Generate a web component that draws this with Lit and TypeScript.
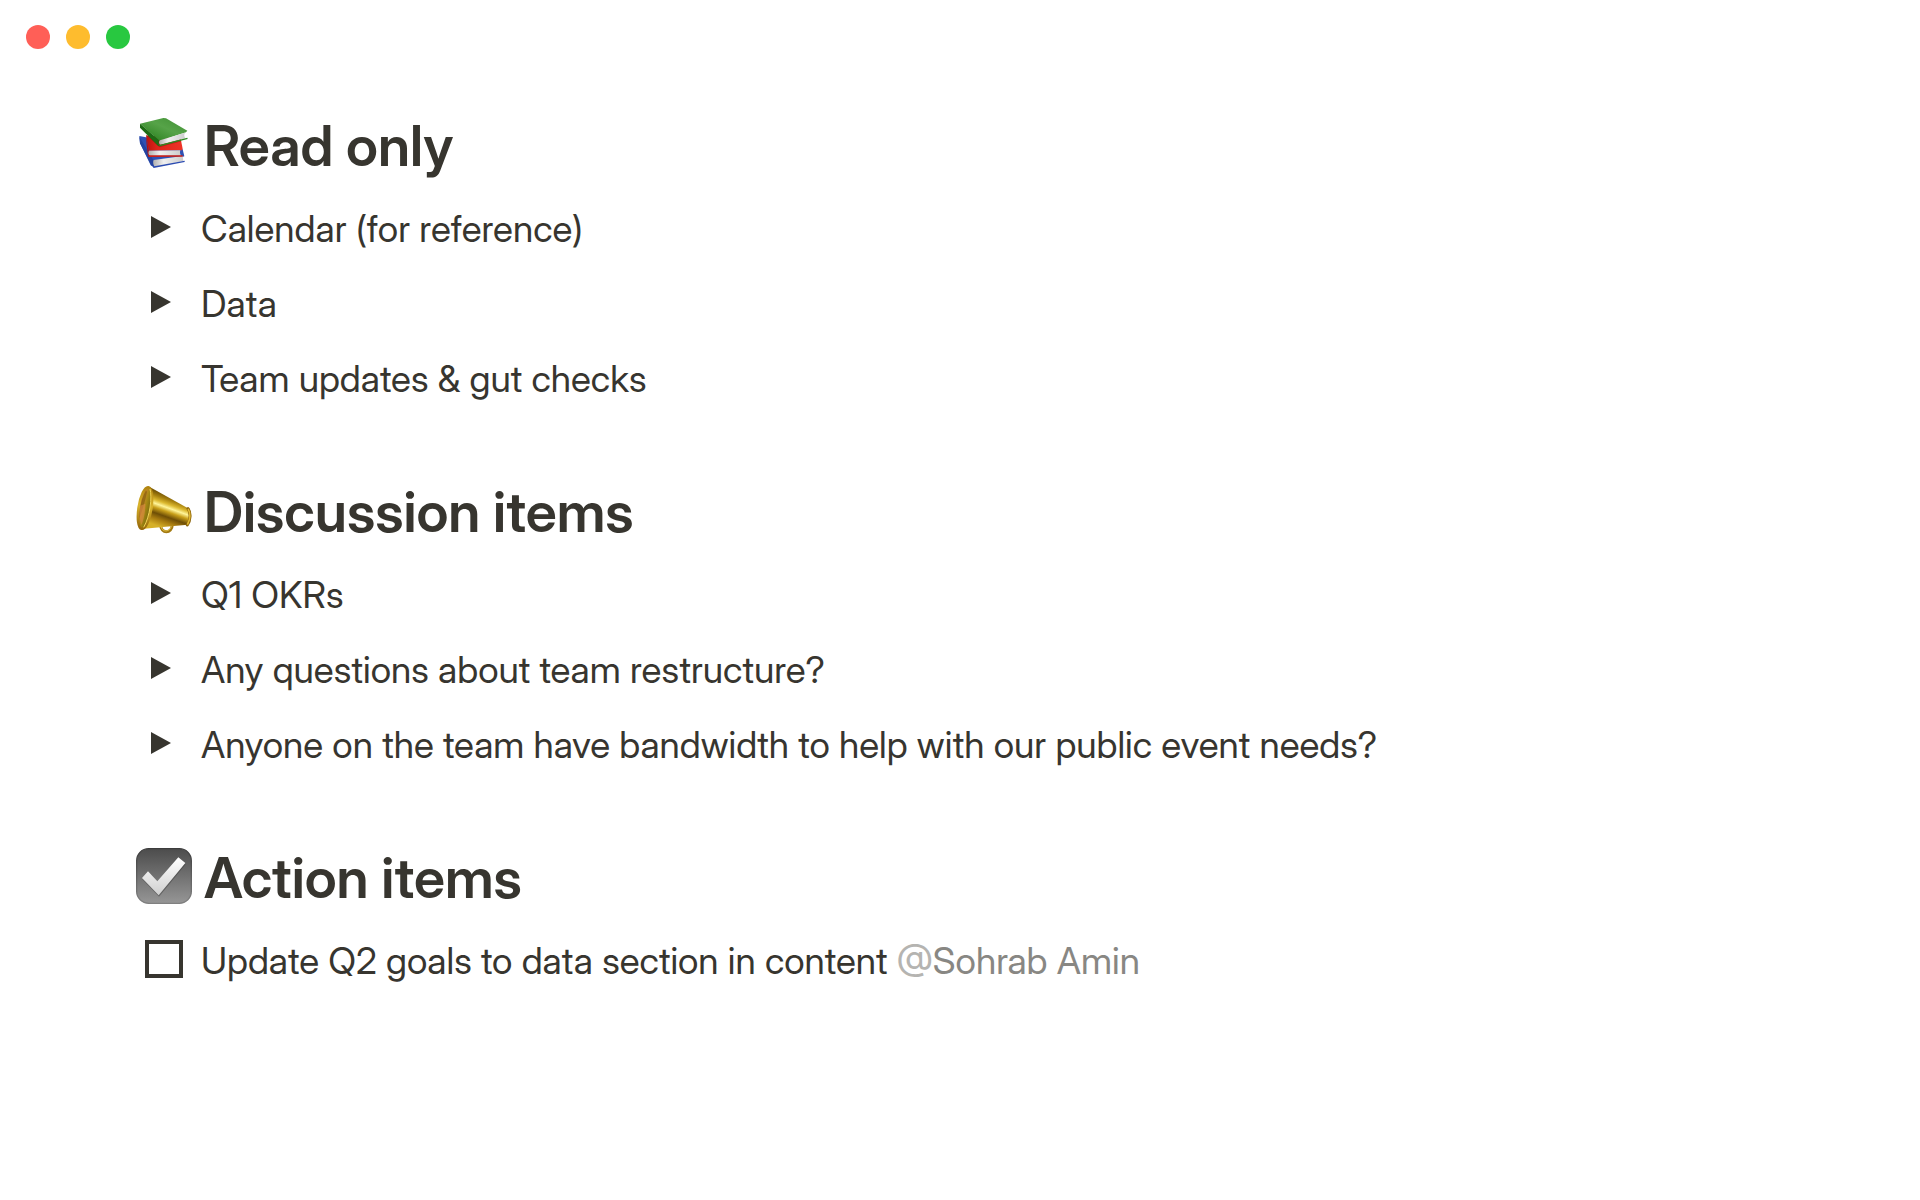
import { LitElement, html, css, svg } from "lit";
import { customElement, property, state } from "lit/decorators.js";

const booksIcon = svg`
  <svg viewBox="18 18 168 168" aria-hidden="true">
    <defs>
      <linearGradient id="bk-green" x1="0" y1="1" x2="1" y2="0">
        <stop offset="0" stop-color="#237a18" />
        <stop offset="0.55" stop-color="#56a348" />
        <stop offset="1" stop-color="#3f8f33" />
      </linearGradient>
      <linearGradient id="bk-page" x1="0" y1="0" x2="1" y2="0">
        <stop offset="0" stop-color="#b0b0b0" />
        <stop offset="0.35" stop-color="#f0f0f0" />
        <stop offset="1" stop-color="#cccccc" />
      </linearGradient>
      <linearGradient id="bk-red" x1="0" y1="0" x2="1" y2="0">
        <stop offset="0" stop-color="#b9140f" />
        <stop offset="0.3" stop-color="#dd241b" />
        <stop offset="1" stop-color="#ee3427" />
      </linearGradient>
    </defs>
    <path d="M28 78 L60 84 L158 118 L163 139 L150 144 L74 152 L74 172 L62 166 L30 100 Z" fill="#2f51b4" />
    <path d="M28 80 L30 100 L64 166 L72 173 L70 150 Z" fill="#2544a0" />
    <path d="M71 150 L158 138 L160 153 L74 170 C69 164 68 156 71 150 Z" fill="url(#bk-page)" />
    <path d="M68 168 L73 169 L164 152 L164 156 L71 174 Z" fill="#2b4bb0" />
    <path d="M48 76 L152 86 L158 116 L156 121 L57 122 Z" fill="url(#bk-red)" />
    <path d="M48 76 L50 106 L54 139 L59 141 L56 120 Z" fill="#b3120e" />
    <path d="M57 122 L151 121 C149 127 150 132 153 137 L60 138 C55 133 54 127 57 122 Z" fill="url(#bk-page)" />
    <path d="M54 136 L158 136 L158 140 L57 141 Z" fill="#c9211a" />
    <path d="M52 78 L88 112 L154 94 L152 88 Z" fill="#7e0d0a" opacity="0.45" />
    <path d="M30 41 L100 24 L108 25 L172 62 L168 67 L90 92 L86 91 Z" fill="url(#bk-green)" />
    <path d="M30 41 L30 53 L84 107 L91 108 L86 102 L87 91 Z" fill="#1d6b14" />
    <path d="M90 91 L165 68 C162 73 162 79 166 85 L91 104 C86 101 86 95 90 91 Z" fill="url(#bk-page)" />
    <path d="M84 103 L91 104 L172 83 L173 87 L90 109 Z" fill="#2b8a20" />
  </svg>
`;

const megaphoneIcon = svg`
  <svg viewBox="18 21 168 168" aria-hidden="true">
    <defs>
      <linearGradient id="mg-cone" gradientUnits="userSpaceOnUse" x1="130" y1="68" x2="98" y2="158">
        <stop offset="0" stop-color="#7a5a08" />
        <stop offset="0.12" stop-color="#a8820f" />
        <stop offset="0.25" stop-color="#dcb930" />
        <stop offset="0.36" stop-color="#fff59a" />
        <stop offset="0.48" stop-color="#c9a01a" />
        <stop offset="0.64" stop-color="#6e4e06" />
        <stop offset="0.8" stop-color="#a87c10" />
        <stop offset="1" stop-color="#d6b028" />
      </linearGradient>
      <linearGradient id="mg-bell" x1="0" y1="0" x2="1" y2="0.3">
        <stop offset="0" stop-color="#a8651a" />
        <stop offset="0.35" stop-color="#c48428" />
        <stop offset="0.6" stop-color="#a88a14" />
        <stop offset="1" stop-color="#7a6a0c" />
      </linearGradient>
      <linearGradient id="mg-rim" x1="0" y1="0" x2="0" y2="1">
        <stop offset="0" stop-color="#b08410" />
        <stop offset="0.45" stop-color="#dab42c" />
        <stop offset="1" stop-color="#96680a" />
      </linearGradient>
    </defs>
    <path d="M92 150 C92 176 126 178 127 148" fill="none" stroke="#a37a12" stroke-width="9" />
    <path d="M93 153 C96 174 121 173 125 150" fill="none" stroke="#e3c246" stroke-width="3" />
    <path d="M58 35 L174 100 C182 110 182 134 173 149 L42 161 Z" fill="url(#mg-cone)" />
    <ellipse cx="45" cy="99" rx="19" ry="63" transform="rotate(9 45 99)" fill="url(#mg-bell)" stroke="url(#mg-rim)" stroke-width="8" />
    <path d="M48 46 C35 68 29 98 28 130 C36 110 45 80 51 50 Z" fill="#7d5a0a" opacity="0.6" />
    <path d="M31 92 C28 116 29 134 34 150 C42 132 46 112 46 86 Z" fill="#de8a48" opacity="0.6" />
    <path d="M60 42 C67 66 60 124 41 157" fill="none" stroke="#f0d458" stroke-width="3" />
    <path d="M174 101 C183 112 182 136 172 150" fill="none" stroke="#8b6309" stroke-width="9" stroke-linecap="round" />
    <path d="M175 103 C182 114 181 133 173 147" fill="none" stroke="#e0b832" stroke-width="5" stroke-linecap="round" />
  </svg>
`;

const checkIcon = svg`
  <svg viewBox="18 22 168 168" aria-hidden="true">
    <defs>
      <linearGradient id="ck-tile" x1="0" y1="0" x2="0" y2="1">
        <stop offset="0" stop-color="#4c4c4c" />
        <stop offset="1" stop-color="#969696" />
      </linearGradient>
      <linearGradient id="ck-edge" x1="0" y1="0" x2="0" y2="1">
        <stop offset="0" stop-color="#3c3c3c" />
        <stop offset="0.7" stop-color="#6d6d6d" />
        <stop offset="1" stop-color="#808080" />
      </linearGradient>
      <linearGradient id="ck-mark" x1="0" y1="0" x2="0" y2="1">
        <stop offset="0" stop-color="#ffffff" />
        <stop offset="1" stop-color="#cfcfcf" />
      </linearGradient>
    </defs>
    <rect x="20" y="24" width="164" height="164" rx="36" fill="url(#ck-tile)" stroke="url(#ck-edge)" stroke-width="4" />
    <path d="M37 116 L54 96 L82 126 L145 54 L167 71 L87 168 Z" fill="#303030" opacity="0.4" />
    <path d="M36 112 L54 92 L82 122 L145 50 L166 67 L86 164 Z" fill="url(#ck-mark)" />
  </svg>
`;

type Section = { icon: unknown; title: string; toggles: string[] };

const sections: Section[] = [
  {
    icon: booksIcon,
    title: "Read only",
    toggles: ["Calendar (for reference)", "Data", "Team updates & gut checks"],
  },
  {
    icon: megaphoneIcon,
    title: "Discussion items",
    toggles: [
      "Q1 OKRs",
      "Any questions about team restructure?",
      "Anyone on the team have bandwidth to help with our public event needs?",
    ],
  },
];

@customElement("toggle-item")
class ToggleItem extends LitElement {
  @property() label = "";
  @state() private open = false;

  static styles = css`
    :host {
      display: block;
    }
    .toggle {
      display: flex;
      align-items: center;
      width: 100%;
      margin: 0;
      padding: 0;
      border: 0;
      background: none;
      color: inherit;
      font: inherit;
      text-align: left;
      cursor: pointer;
    }
    .marker {
      flex: none;
      display: flex;
      width: 50px;
      padding: 0 0 4px 15px;
    }
    .arrow {
      width: 20px;
      height: 22px;
      fill: currentColor;
    }
    .arrow.open {
      transform: rotate(90deg);
    }
  `;

  render() {
    return html`
      <button
        class="toggle"
        aria-expanded=${this.open ? "true" : "false"}
        @click=${() => (this.open = !this.open)}
      >
        <span class="marker">
          <svg class="arrow ${this.open ? "open" : ""}" viewBox="0 0 20 22" aria-hidden="true">
            <path d="M0 0 L20 11 L0 22 Z" />
          </svg>
        </span>
        <span>${this.label}</span>
      </button>
    `;
  }
}

@customElement("app-root")
class AppRoot extends LitElement {
  static styles = css`
    :host {
      display: block;
      min-height: 100vh;
      background: #ffffff;
      color: #37352f;
      font-family: "Inter Display", Inter, "Liberation Sans", sans-serif;
      font-size: 37px;
      line-height: 75px;
    }
    .titlebar {
      display: flex;
      gap: 16px;
      padding: 25px 26px;
    }
    .light {
      width: 24px;
      height: 24px;
      padding: 0;
      border: 0;
      border-radius: 50%;
    }
    .close {
      background: #ff5f57;
    }
    .minimize {
      background: #febc2e;
    }
    .zoom {
      background: #28c840;
    }
    .page {
      display: flex;
      flex-direction: column;
      gap: 51px;
      padding: 27px 136px;
    }
    .heading {
      display: flex;
      align-items: center;
      gap: 12px;
      margin: 0;
      font-size: 56px;
      font-weight: 600;
      line-height: 90px;
    }
    .icon {
      flex: none;
      display: flex;
      width: 56px;
      height: 56px;
      margin-bottom: 4px;
    }
    .icon svg {
      width: 100%;
      height: 100%;
    }
    .list {
      margin: 0;
      padding: 0;
      list-style: none;
    }
    .task {
      display: flex;
      align-items: center;
    }
    .box {
      appearance: none;
      flex: none;
      box-sizing: border-box;
      width: 38px;
      height: 38px;
      margin: 0 18px 4px 9px;
      border: 4px solid #37352f;
    }
    .box:checked {
      background: #37352f;
    }
    .mention {
      color: #888783;
      text-decoration: none;
    }
    .at {
      color: #b5b4b1;
    }
  `;

  private heading(icon: unknown, title: string) {
    return html`<h2 class="heading"><span class="icon">${icon}</span><span>${title}</span></h2>`;
  }

  render() {
    return html`
      <header class="titlebar">
        <button class="light close" aria-label="Close"></button>
        <button class="light minimize" aria-label="Minimize"></button>
        <button class="light zoom" aria-label="Zoom"></button>
      </header>
      <main class="page">
        ${sections.map(
          (s) => html`
            <section>
              ${this.heading(s.icon, s.title)}
              <ul class="list">
                ${s.toggles.map((t) => html`<li><toggle-item .label=${t}></toggle-item></li>`)}
              </ul>
            </section>
          `
        )}
        <section>
          ${this.heading(checkIcon, "Action items")}
          <div class="task">
            <input class="box" type="checkbox" id="task-goals" />
            <div>
              <label for="task-goals">Update Q2 goals to data section in content</label>
              <a class="mention" href="#sohrab-amin"><span class="at">@</span>Sohrab Amin</a>
            </div>
          </div>
        </section>
      </main>
    `;
  }
}
